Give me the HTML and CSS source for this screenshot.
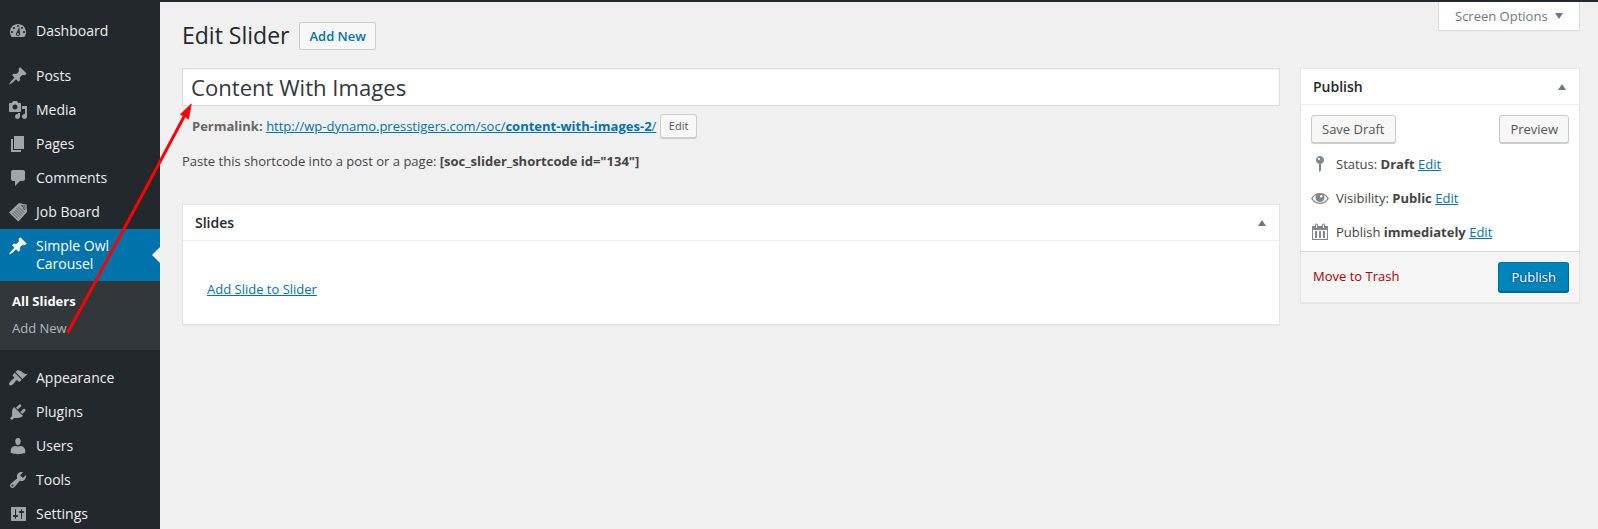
FILE: index.html
```
<!DOCTYPE html>
<html lang="en">
<head>
<meta charset="utf-8">
<title>Edit Slider</title>
<link rel="stylesheet" href="styles.css">
</head>
<body>
<div class="admin-bar"></div>
<div class="layout">
  <nav class="menu">
    <a class="item"><svg class="icon" viewBox="0 0 20 20"><path fill-rule="evenodd" d="M3.76 16h12.48c1.1-1.37 1.76-3.11 1.76-5 0-4.42-3.58-8-8-8s-8 3.58-8 8c0 1.89.66 3.63 1.76 5zM10 4c.55 0 1 .45 1 1s-.45 1-1 1-1-.45-1-1 .45-1 1-1zM6 6c.55 0 1 .45 1 1s-.45 1-1 1-1-.45-1-1 .45-1 1-1zm8 0c.55 0 1 .45 1 1s-.45 1-1 1-1-.45-1-1 .45-1 1-1zm-2.600.1L12 13c0 1.100-.9 2-2 2s-2-.9-2-2c0-.57.24-1.080.63-1.450zM4 10c.55 0 1 .45 1 1s-.45 1-1 1-1-.45-1-1 .45-1 1-1zm12 0c.55 0 1 .45 1 1s-.45 1-1 1-1-.45-1-1 .45-1 1-1zm-5 3c0-.55-.45-1-1-1s-1 .45-1 1 .45 1 1 1 1-.45 1-1z"/></svg><span>Dashboard</span></a>
    <div class="separator"></div>
    <a class="item"><svg class="icon" viewBox="0 0 20 20"><path d="M10.44 3.02l1.82-1.82 6.36 6.35-1.83 1.82c-1.05-.68-2.48-.57-3.41.36l-.75.75c-.92.93-1.04 2.35-.35 3.41l-1.83 1.82-2.41-2.41-2.8 2.79c-.42.42-3.38 2.71-3.8 2.29s1.86-3.39 2.28-3.81l2.79-2.79L4.1 9.36l1.83-1.82c1.05.69 2.48.57 3.4-.36l.75-.75c.93-.92 1.05-2.35.36-3.41z"/></svg><span>Posts</span></a>
    <a class="item"><svg class="icon" viewBox="0 0 20 20"><path fill-rule="evenodd" d="M13 11V4c0-.55-.45-1-1-1h-1.67L9 1H5L3.67 3H2c-.55 0-1 .45-1 1v7c0 .55.45 1 1 1h10c.55 0 1-.45 1-1zM7 4.5c1.38 0 2.5 1.12 2.5 2.5S8.38 9.5 7 9.5 4.5 8.38 4.5 7 5.62 4.5 7 4.5zM14 6h5v10.5c0 1.38-1.12 2.5-2.5 2.5S14 17.88 14 16.5s1.12-2.5 2.5-2.5c.17 0 .34.02.5.05V9h-3V6zm-4 8.05V13h2v3.5c0 1.38-1.12 2.5-2.5 2.5S7 17.88 7 16.5 8.12 14 9.5 14c.17 0 .34.02.5.05z"/></svg><span>Media</span></a>
    <a class="item"><svg class="icon" viewBox="0 0 20 20"><path d="M6 15V2h10v13H6zm-1 1h8v2H3V5h2v11z"/></svg><span>Pages</span></a>
    <a class="item"><svg class="icon" viewBox="0 0 20 20"><path d="M5 2h10c1.1 0 2 .9 2 2v7c0 1.1-.9 2-2 2h-3l-5 5v-5H5c-1.1 0-2-.9-2-2V4c0-1.1.9-2 2-2z"/></svg><span>Comments</span></a>
    <a class="item"><svg class="icon" viewBox="0 0 20 20"><path d="M1 10.500L11 1l4.500 1 3 .5.500 7.500L10.300 19.500z"/><path class="tag-lines" d="M4.200 10.700l6 6M5.700 9.200l6 6M7.200 7.700l6 6M8.700 6.200l6 6M10.200 4.700l6 6"/><path class="tag-lines" d="M13.200 3.600l3.600.2.200 3.800-1.700-.5.200-2z"/></svg><span>Job Board</span></a>
    <a class="item current"><svg class="icon" viewBox="0 0 20 20"><path d="M10.44 3.02l1.82-1.82 6.36 6.35-1.83 1.82c-1.05-.68-2.48-.57-3.41.36l-.75.75c-.92.93-1.04 2.35-.35 3.41l-1.83 1.82-2.41-2.41-2.8 2.79c-.42.42-3.38 2.71-3.8 2.29s1.86-3.39 2.28-3.81l2.79-2.79L4.1 9.36l1.83-1.82c1.05.69 2.48.57 3.4-.36l.75-.75c.93-.92 1.05-2.35.36-3.41z"/></svg><span>Simple Owl Carousel</span></a>
    <div class="submenu"><a class="active">All Sliders</a><a>Add New</a></div>
    <div class="separator"></div>
    <a class="item"><svg class="icon" viewBox="0 0 20 20"><path d="M14.48 11.06L7.41 3.99l1.5-1.5c.5-.56 2.3-.47 3.51.32 1.21.8 1.43 1.28 2.91 2.1 1.18.64 2.45 1.26 4.45.85zm-.71.71L6.7 4.7 4.93 6.47c-.39.39-.39 1.02 0 1.41l1.06 1.06c.39.39.39 1.03 0 1.42-.6.6-1.43 1.11-2.21 1.69-.35.26-.7.53-1.01.84C1.43 14.23.4 16.08 1.4 17.07c.99 1 2.84-.03 4.18-1.36.31-.31.58-.66.85-1.02.57-.78 1.08-1.61 1.69-2.21.39-.39 1.02-.39 1.41 0l1.06 1.06c.39.39 1.02.39 1.41 0z"/></svg><span>Appearance</span></a>
    <a class="item"><svg class="icon" viewBox="0 0 20 20"><path d="M13.11 4.36L9.87 7.6 8 5.73l3.24-3.24c.35-.34 1.05-.2 1.56.32.52.51.66 1.21.31 1.55zm-8 1.77l.91-1.12 9.01 9.01-1.19.84c-.71.71-2.63 1.16-3.82 1.16H6.14L4.9 17.26c-.59.59-1.54.59-2.12 0-.59-.58-.59-1.53 0-2.12l1.24-1.24v-3.88c0-1.13.4-3.19 1.09-3.89zm7.26 3.97l3.24-3.24c.34-.35 1.04-.21 1.55.31.52.51.66 1.21.31 1.55l-3.24 3.25z"/></svg><span>Plugins</span></a>
    <a class="item"><svg class="icon" viewBox="0 0 20 20"><path d="M10 9.250c-2.270 0-2.730-3.440-2.730-3.440C7 4.020 7.820 2 9.970 2c2.160 0 2.980 2.020 2.710 3.810 0 0-.41 3.440-2.680 3.440zm0 1.200L12.720 10c2.390 0 4.520 2.330 4.520 4.530v2.490s-3.650 1.130-7.240 1.130c-3.650 0-7.240-1.130-7.240-1.130v-2.490c0-2.250 1.940-4.480 4.470-4.480z"/></svg><span>Users</span></a>
    <a class="item"><svg class="icon" viewBox="0 0 20 20"><path fill-rule="evenodd" d="M16.68 9.77c-1.34 1.34-3.3 1.67-4.95.99l-5.41 6.52c-.99.99-2.59.99-3.58 0s-.99-2.59 0-3.57l6.52-5.42c-.68-1.65-.35-3.61.99-4.95 1.28-1.28 3.12-1.62 4.72-1.06l-2.89 2.89 2.82 2.82 2.86-2.87c.53 1.58.18 3.39-1.08 4.65zM3.81 16.21c.4.39 1.04.39 1.43 0 .4-.4.4-1.04 0-1.43-.39-.4-1.03-.4-1.43 0-.39.39-.39 1.03 0 1.43z"/></svg><span>Tools</span></a>
    <a class="item"><svg class="icon" viewBox="0 0 20 20"><path fill-rule="evenodd" d="M18 16V4c0-.55-.45-1-1-1H4c-.55 0-1 .45-1 1v12c0 .55.45 1 1 1h13c.55 0 1-.45 1-1zM8 11h1c.55 0 1 .45 1 1s-.45 1-1 1H8v1.500c0 .28-.22.5-.5.5s-.5-.22-.5-.5V13H6c-.55 0-1-.45-1-1s.45-1 1-1h1V5.500c0-.28.22-.5.5-.5s.5.22.5.5V11zm5-2h-1c-.55 0-1-.45-1-1s.45-1 1-1h1V5.500c0-.28.22-.5.5-.5s.5.22.5.5V7h1c.55 0 1 .45 1 1s-.45 1-1 1h-1v5.500c0 .28-.22.5-.5.5s-.5-.22-.5-.5V9z"/></svg><span>Settings</span></a>
  </nav>

  <main class="content">
    <header class="page-head">
      <h1>Edit Slider</h1>
      <a class="add-new">Add New</a>
      <button class="screen-options">Screen Options <svg class="caret" viewBox="0 0 8 6"><path d="M0 0h8L4 6z"/></svg></button>
    </header>
    <div class="columns">
      <section class="primary">
        <div class="title-field">Content With Images</div>
        <div class="permalink"><strong>Permalink:</strong> <a class="link">http://wp-dynamo.presstigers.com/soc/<b>content-with-images-2</b>/</a> <button class="button small">Edit</button></div>
        <p class="shortcode">Paste this shortcode into a post or a page: <b>[soc_slider_shortcode id="134"]</b></p>
        <div class="box slides">
          <h2 class="box-title">Slides<svg class="toggle" viewBox="0 0 8 6"><path d="M0 6h8L4 0z"/></svg></h2>
          <div class="slides-body"><a class="link">Add Slide to Slider</a></div>
        </div>
      </section>
      <aside class="box publish">
        <h2 class="box-title">Publish<svg class="toggle" viewBox="0 0 8 6"><path d="M0 6h8L4 0z"/></svg></h2>
        <div class="actions"><button class="button">Save Draft</button><button class="button">Preview</button></div>
        <div class="meta"><svg class="meta-icon" viewBox="0 0 20 20"><path fill-rule="evenodd" d="M14 6c0 1.860-1.280 3.410-3 3.860V16c0 1-2 2-2 2V9.860c-1.720-.45-3-2-3-3.860 0-2.210 1.790-4 4-4s4 1.790 4 4zM8 5c0 .55.45 1 1 1s1-.45 1-1-.45-1-1-1-1 .45-1 1z"/></svg><span>Status: <b>Draft</b> <a class="link">Edit</a></span></div>
        <div class="meta"><svg class="meta-icon" viewBox="0 0 20 20"><path fill-rule="evenodd" d="M1 10.500C3.500 6.700 6.500 5 10 5s6.500 1.700 9 5.500c-2.500 3.800-5.500 5.500-9 5.500s-6.500-1.700-9-5.500zM2.600 10.500c2 2.900 4.500 4.300 7.400 4.300s5.400-1.400 7.400-4.300c-1.100-1.700-2.400-2.900-3.800-3.500.6.700.9 1.600.9 2.500a4.500 4.500 0 0 1-9 0c0-.9.300-1.800.9-2.500-1.400.6-2.700 1.800-3.800 3.500zM11.200 7a1.200 1.200 0 1 0 0 2.400 1.200 1.200 0 0 0 0-2.400z"/></svg><span>Visibility: <b>Public</b> <a class="link">Edit</a></span></div>
        <div class="meta"><svg class="meta-icon" viewBox="0 0 20 20"><path fill-rule="evenodd" d="M15 4h3v14H2V4h3V3c0-.83.67-1.500 1.500-1.500S8 2.170 8 3v1h4V3c0-.83.67-1.500 1.500-1.500S15 2.170 15 3v1zM6 3v2.500c0 .28.22.5.5.5s.5-.22.5-.5V3c0-.28-.22-.5-.5-.5S6 2.720 6 3zm7 0v2.500c0 .28.22.5.5.5s.5-.22.5-.5V3c0-.28-.22-.5-.5-.5s-.5.22-.5.5zm4 14V8H3v9h14zM7 16V9H5v7h2zm4 0V9H9v7h2zm4 0V9h-2v7h2z"/></svg><span>Publish <b>immediately</b> <a class="link">Edit</a></span></div>
        <footer class="publish-footer"><a class="trash">Move to Trash</a><button class="button primary-button">Publish</button></footer>
      </aside>
    </div>
  </main>
</div>
<svg class="annotation" viewBox="0 0 1598 529"><path class="shaft" d="M67.500 333Q126 226 186 113"/><path class="head" d="M191.300 104l-11 10.500 4 1.500 4.200 3.200z"/></svg>
</body>
</html>
```
FILE: styles.css
```
* { box-sizing: border-box; }
body {
  margin: 0;
  height: 529px;
  overflow: hidden;
  background: #f0f0f0;
  color: #444;
  font: 13px/18px "Open Sans", sans-serif;
}
h1, h2, p { margin: 0; }
b, strong { font-weight: 700; }
button { font-family: inherit; }
.admin-bar { height: 2px; background: #23282d; }
.layout { display: flex; height: 527px; }

.menu { width: 160px; flex: none; padding-top: 12px; background: #23282d; overflow: hidden; }
.item {
  display: flex;
  gap: 8px;
  height: 34px;
  padding: 7px 30px 7px 8px;
  color: #eee;
  font-size: 14px;
  line-height: 18px;
}
.item span { padding-top: 1px; white-space: nowrap; }
.icon { width: 20px; height: 20px; flex: none; fill: #a0a5aa; }
.tag-lines { fill: none; stroke: #23282d; stroke-width: .6; }
.separator { height: 11px; }
.item.current { position: relative; height: 52px; background: #0073aa; color: #fff; }
.current span { white-space: normal; }
.current .icon { fill: #fff; }
.current::after {
  content: "";
  position: absolute;
  right: 0;
  top: 18px;
  border: 8px solid transparent;
  border-left: 0;
  border-right-color: #f0f0f0;
}
.submenu { height: 69px; padding: 7px 12px; background: #32373c; color: #b4b9be; }
.submenu a { display: block; padding: 4px 0 5px; }
.submenu .active { color: #fff; font-weight: 700; }

.content { flex: 1; padding: 0 18px 0 22px; }
.page-head { display: flex; align-items: flex-start; height: 66px; }
h1 { padding-top: 19px; color: #23282d; font-size: 23px; line-height: 29px; font-weight: 400; }
.add-new {
  height: 28px;
  margin: 20px 0 0 10px;
  padding: 4px 9px;
  border: 1px solid #ccc;
  border-radius: 2px;
  background: #f7f7f7;
  color: #0073aa;
  font-weight: 600;
}
.screen-options {
  display: flex;
  align-items: center;
  justify-content: space-between;
  width: 142px;
  height: 29px;
  margin-left: auto;
  padding: 0 16px;
  border: 1px solid #ddd;
  border-top: 0;
  background: #fff;
  box-shadow: 0 1px 1px -1px rgba(0, 0, 0, .1);
  color: #72777c;
  font-size: 13px;
  white-space: nowrap;
}
.caret { width: 8px; height: 6px; flex: none; fill: #72777c; }
.columns { display: flex; align-items: flex-start; gap: 20px; }
.primary { flex: 1; }
.title-field {
  height: 38px;
  padding: 0 8px;
  border: 1px solid #ddd;
  background: #fff;
  box-shadow: inset 0 1px 2px rgba(0, 0, 0, .07);
  color: #32373c;
  font-size: 22.1px;
  line-height: 36px;
}
.permalink { display: flex; align-items: center; gap: 3.500px; height: 41px; padding: 0 0 2px 10px; color: #666; }
.link { color: #0073aa; text-decoration: underline; }
.shortcode { height: 57px; padding-top: 5px; }
.button {
  height: 28px;
  padding: 0 10px;
  border: 1px solid #ccc;
  border-radius: 3px;
  background: #f7f7f7;
  box-shadow: 0 1px 0 #ccc;
  color: #555;
  font-size: 13px;
}
.small { height: 24px; padding: 0 8px; font-size: 11px; }
.box { border: 1px solid #e5e5e5; background: #fff; box-shadow: 0 1px 1px rgba(0, 0, 0, .04); }
.box-title {
  display: flex;
  align-items: center;
  justify-content: space-between;
  height: 36px;
  padding: 0 13px 0 12px;
  border-bottom: 1px solid #eee;
  color: #23282d;
  font-size: 14px;
  font-weight: 600;
}
.toggle { width: 8px; height: 6px; fill: #72777c; }
.slides { height: 121px; }
.slides-body { padding: 39px 24px; }
.publish { width: 280px; height: 235px; }
.actions { display: flex; justify-content: space-between; height: 43px; padding: 10px 10px 0; }
.meta { display: flex; align-items: flex-start; gap: 6px; height: 34px; padding: 6px 10px 0 9px; }
.meta span { padding-top: 1px; }
.meta-icon { width: 20px; height: 20px; fill: #82878c; }
.publish-footer {
  display: flex;
  align-items: center;
  justify-content: space-between;
  height: 51px;
  margin-top: 1px;
  padding: 0 10px 0 12px;
  border-top: 1px solid #ddd;
  background: #f5f5f5;
}
.trash { padding-bottom: 2px; color: #a00; }
.primary-button {
  height: 30px;
  padding: 0 12px 0 13px;
  border-color: #0073aa #006799 #006799;
  background: #0085ba;
  box-shadow: 0 1px 0 #006799;
  color: #fff;
  text-shadow: 0 -1px 1px #006799, 1px 0 1px #006799, 0 1px 1px #006799, -1px 0 1px #006799;
}
.annotation { position: absolute; left: 0; top: 0; width: 1598px; height: 529px; pointer-events: none; }
.shaft { fill: none; stroke: #f00; stroke-width: 3; }
.head { fill: #f00; stroke: #f00; stroke-width: .8; }
```
